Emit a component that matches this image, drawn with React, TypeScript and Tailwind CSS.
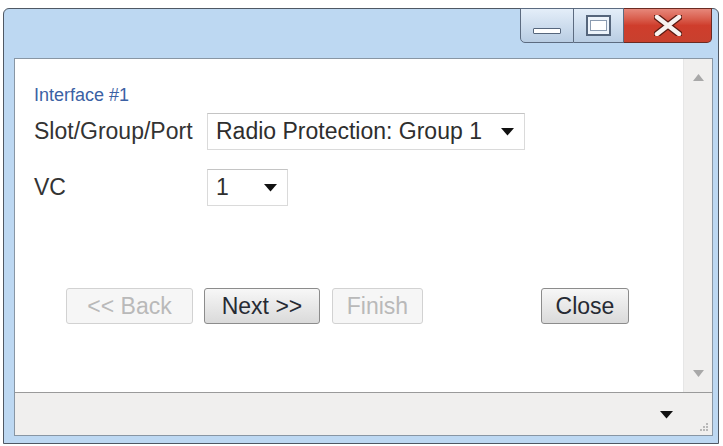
import React from "react";

const font = { fontFamily: '"Liberation Sans", Arial, sans-serif' };

const Arrow = ({ className = "" }: { className?: string }) => (
  <svg width="13" height="8" viewBox="0 0 13 8" className={className}>
    <path d="M0 0 L13 0 L6.5 7.5 Z" fill="#111" />
  </svg>
);

const Select = ({ value, width }: { value: string; width: string }) => (
  <div
    className={`${width} h-[37px] flex items-center justify-between pl-[8px] pr-[10px] bg-white border border-[#dadada] border-t-[#c4c4c4] text-[23px] text-[#2e2e2e]`}
  >
    <span>{value}</span>
    <Arrow />
  </div>
);

const WinButtons = () => (
  <div className="flex h-[35px] -mt-px">
    <div className="w-[54px] h-full flex items-center justify-center border border-[#5c6b80] rounded-bl-[5px] bg-gradient-to-b from-[#e4eef9] to-[#b9cde3]">
      <div className="w-[28px] h-[6px] mt-[10px] bg-white border border-[#56667c] rounded-[1px]" />
    </div>
    <div className="w-[50px] h-full flex items-center justify-center border-y border-r border-[#5c6b80] bg-gradient-to-b from-[#e4eef9] to-[#b9cde3]">
      <div className="w-[25px] h-[21px] border-[2px] border-[#56667c] bg-[#eef4fb] flex items-center justify-center">
        <div className="w-[17px] h-[11px] border border-[#8b9bb0] bg-white" />
      </div>
    </div>
    <div className="w-[88px] h-full flex items-center justify-center border-y border-r border-[#6b2a22] rounded-br-[5px] bg-gradient-to-b from-[#e6877a] via-[#cf3d2c] to-[#c8402e]">
      <svg width="28" height="21" viewBox="0 0 28 21">
        <path d="M3 2 L25 19 M25 2 L3 19" stroke="#5a1a12" strokeWidth="7" strokeLinecap="round" />
        <path d="M3 2 L25 19 M25 2 L3 19" stroke="#f7f2f0" strokeWidth="4.5" strokeLinecap="round" />
      </svg>
    </div>
  </div>
);

const Btn = ({ label, width, disabled }: { label: string; width: string; disabled?: boolean }) => (
  <div
    className={
      disabled
        ? `${width} h-[36px] flex items-center justify-center rounded-[3px] border border-[#d2d2d2] bg-[#f6f6f6] text-[23px] text-[#b9b9b9]`
        : `${width} h-[36px] flex items-center justify-center rounded-[3px] border border-[#8c8c8c] bg-gradient-to-b from-[#f7f7f7] to-[#dadada] text-[23px] text-[#262a33]`
    }
  >
    {label}
  </div>
);

export default function App() {
  return (
    <div className="w-[723px] h-[446px] bg-white pt-[8px] pl-[3px]" style={font}>
      <div className="w-[716px] h-[436px] flex flex-col border border-[#4f5864] rounded-t-[6px] bg-[#bdd8f2]">
        <div className="h-[49px] flex justify-end pr-[6px]">
          <WinButtons />
        </div>
        <div className="flex-1 ml-[10px] mr-[5px] mb-[7px] flex flex-col border border-[#8896a4] bg-white">
          <div className="flex-1 flex">
            <div className="flex-1 flex flex-col pl-[19px] pt-[25px]">
              <div className="text-[18px] leading-[22px] text-[#3b61a4]">Interface #1</div>
              <div className="flex items-center mt-[7px]">
                <div className="w-[173px] text-[23px] text-[#333]">Slot/Group/Port</div>
                <Select value="Radio Protection: Group 1" width="w-[318px]" />
              </div>
              <div className="flex items-center mt-[19px]">
                <div className="w-[173px] text-[23px] text-[#333]">VC</div>
                <Select value="1" width="w-[81px]" />
              </div>
              <div className="flex items-center mt-[82px] pl-[32px]">
                <Btn label="<< Back" width="w-[127px]" disabled />
                <div className="ml-[11px]">
                  <Btn label="Next >>" width="w-[116px]" />
                </div>
                <div className="ml-[12px]">
                  <Btn label="Finish" width="w-[91px]" disabled />
                </div>
                <div className="ml-[118px]">
                  <Btn label="Close" width="w-[88px]" />
                </div>
              </div>
            </div>
            <div className="w-[29px] bg-[#f0efee] border-l border-[#e6e6e6] flex flex-col items-center justify-between py-[15px]">
              <svg width="11" height="7" viewBox="0 0 11 7">
                <path d="M0 7 L11 7 L5.5 0 Z" fill="#a8a8a8" />
              </svg>
              <svg width="11" height="7" viewBox="0 0 11 7">
                <path d="M0 0 L11 0 L5.5 7 Z" fill="#a8a8a8" />
              </svg>
            </div>
          </div>
          <div className="h-[43px] border-t border-[#9a9a9a] bg-[#f0efee] flex items-center justify-end relative">
            <Arrow className="mr-[39px] mt-[1px]" />
            <svg width="10" height="10" viewBox="0 0 10 10" className="absolute right-[3px] bottom-[3px]">
              <rect x="7" y="1" width="2" height="2" fill="#b8b8b8" />
              <rect x="4" y="4" width="2" height="2" fill="#b8b8b8" />
              <rect x="7" y="4" width="2" height="2" fill="#b8b8b8" />
              <rect x="1" y="7" width="2" height="2" fill="#b8b8b8" />
              <rect x="4" y="7" width="2" height="2" fill="#b8b8b8" />
              <rect x="7" y="7" width="2" height="2" fill="#b8b8b8" />
            </svg>
          </div>
        </div>
      </div>
    </div>
  );
}
